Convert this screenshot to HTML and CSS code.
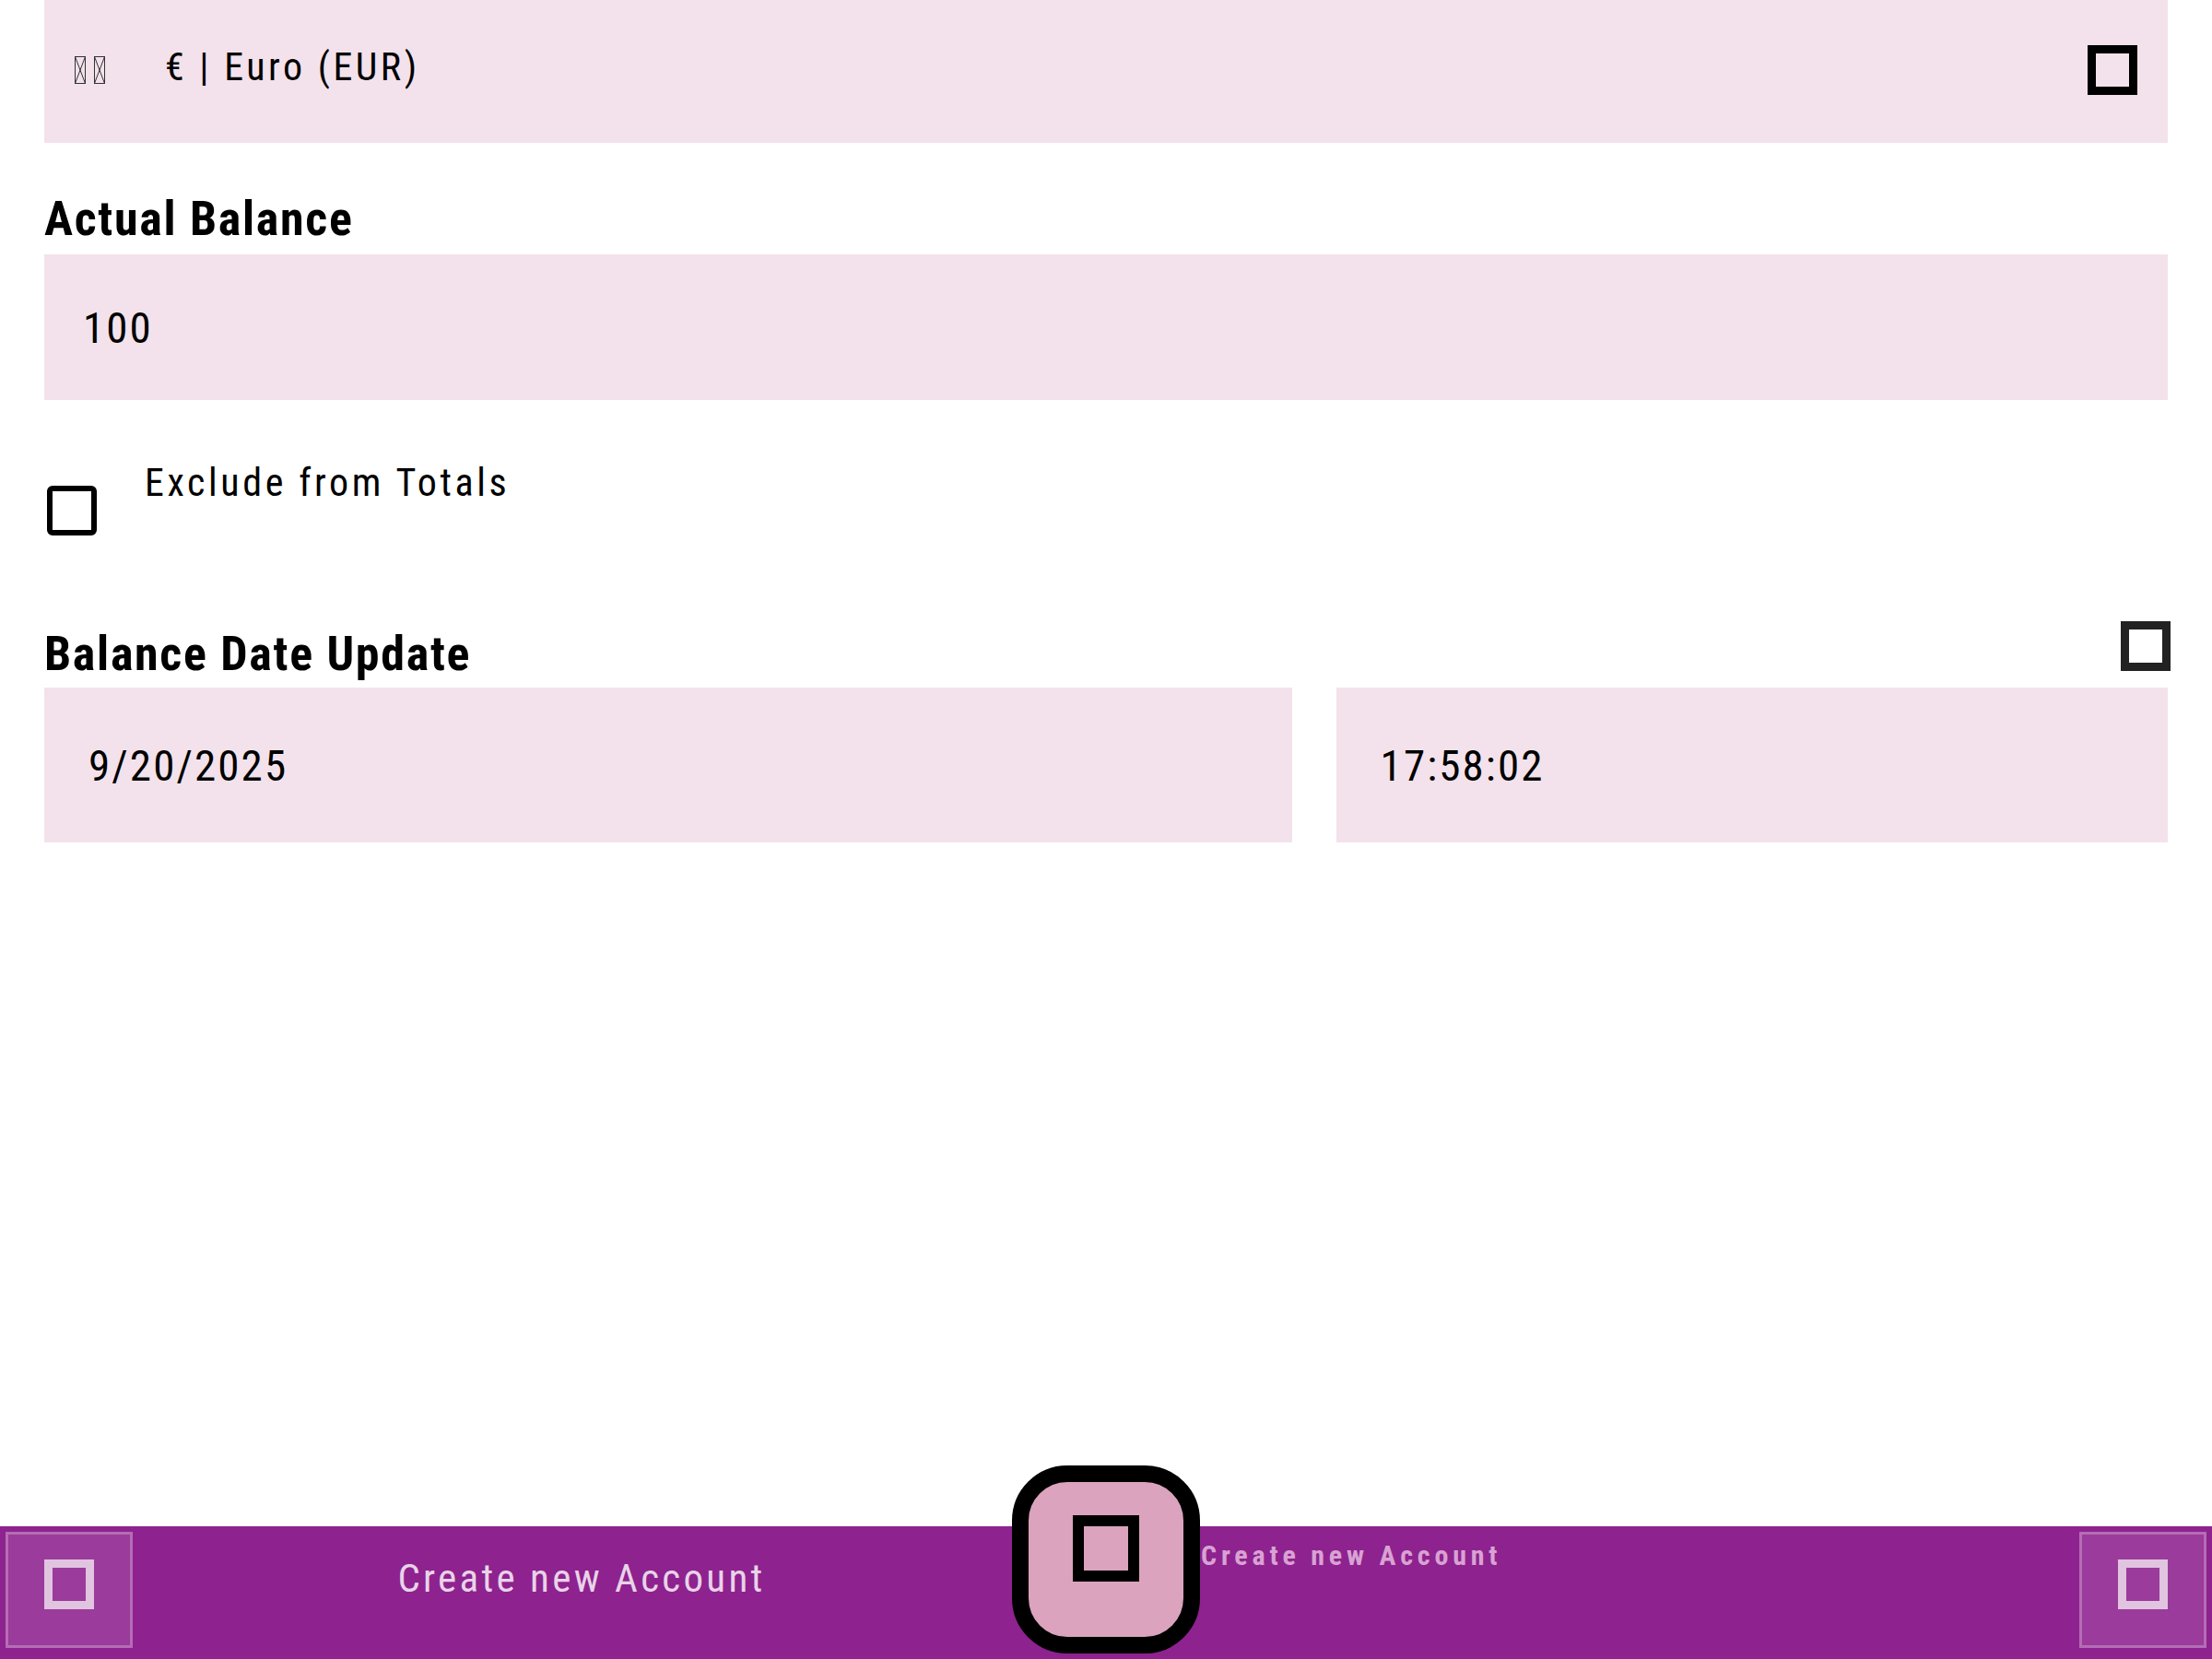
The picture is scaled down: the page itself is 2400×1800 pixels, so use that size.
FILE: index.html
```html
<!DOCTYPE html>
<html lang="en">
<head>
<meta charset="utf-8">
<title>Account</title>
<link rel="stylesheet" href="styles.css">
</head>
<body>
<div class="screen">
  <main class="form">
    <div class="field select-field">
      <span class="flag" aria-label="EU flag">
        <svg width="33" height="30" viewBox="0 0 33 30"><g fill="none" stroke="#333" stroke-width="1"><rect x="0.5" y="0.5" width="11" height="29"/><path d="M0.5 0.5 L11.5 29.5 M11.5 0.5 L0.5 29.5"/><rect x="21.5" y="0.5" width="11" height="29"/><path d="M21.5 0.5 L32.5 29.5 M32.5 0.5 L21.5 29.5"/></g></svg>
      </span>
      <span class="select-text">€ | Euro (EUR)</span>
      <span class="icon-box"></span>
    </div>
    <h2 class="label">Actual Balance</h2>
    <div class="field input-field"><span class="value">100</span></div>
    <div class="check-row">
      <span class="checkbox"></span>
      <span class="check-label">Exclude from Totals</span>
    </div>
    <div class="label-row">
      <h2 class="label">Balance Date Update</h2>
      <span class="icon-box dark"></span>
    </div>
    <div class="date-row">
      <div class="field date-field"><span class="value">9/20/2025</span></div>
      <div class="field time-field"><span class="value">17:58:02</span></div>
    </div>
  </main>
  <footer class="bottom-bar">
    <button class="bar-btn" type="button"><span class="icon-box light"></span></button>
    <div class="bar-label">Create new Account</div>
    <button class="fab" type="button"><span class="icon-box big"></span></button>
    <span class="fab-label">Create new Account</span>
    <button class="bar-btn end" type="button"><span class="icon-box light"></span></button>
  </footer>
</div>
</body>
</html>
```

FILE: styles.css
```css
* { box-sizing: border-box; }
html, body { margin: 0; padding: 0; background: #fff; }
body { font-family: Roboto, "Noto Sans", sans-serif; font-stretch: 75%; color: #000; }

.screen { width: 2400px; height: 1800px; display: flex; flex-direction: column; overflow: hidden; }
.form { flex: 1; padding: 0 48px; display: flex; flex-direction: column; }

.field { background: #f3e2eb; display: flex; align-items: center; }
.select-field { height: 155px; padding: 0 33px 4px 33px; }
.flag { display: flex; width: 98px; flex: none; }
.flag svg { display: block; }
.select-text { flex: 1; margin-bottom: 6px; font-size: 42px; line-height: 1; letter-spacing: 3.5px; }

.icon-box { display: block; width: 54px; height: 54px; border: 9px solid #000; flex: none; }
.icon-box.dark { border-color: #222; }
.icon-box.light { border-color: #e0c4e0; }
.icon-box.big { width: 72px; height: 72px; border-width: 12px; }

.label { margin: 57px 0 12px; font-size: 52px; line-height: 1; font-weight: 700; letter-spacing: 1.7px; }
.input-field { height: 158px; padding: 0 42px; }
.value { font-size: 47px; line-height: 1; letter-spacing: 2.1px; }

.check-row { display: flex; align-items: flex-start; margin-top: 69px; }
.checkbox { display: block; width: 54px; height: 54px; border: 6px solid #000; border-radius: 6px; margin: 24px 0 0 3px; flex: none; }
.check-label { margin-left: 52px; font-size: 42px; line-height: 1; letter-spacing: 3.6px; }

.label-row { display: flex; justify-content: space-between; align-items: flex-start; margin-top: 103px; }
.label-row .label { margin: 0 0 10px; }
.label-row .icon-box { margin: -10px -3px 0 0; }

.date-row { display: grid; grid-template-columns: 3fr 2fr; gap: 48px; }
.date-field, .time-field { height: 168px; padding: 0 48px; }

.bottom-bar { height: 144px; flex: none; background: #8e228e; display: flex; align-items: flex-start; padding: 6px 6px 0; }
.bar-btn { width: 138px; height: 126px; margin: 0; background: #9b3b9b; border: 3px solid #b56db5; padding: 27px 0 0; display: flex; justify-content: center; align-items: flex-start; flex: none; }
.bar-btn.end { margin-left: auto; }
.bar-label { width: 954px; flex: none; margin-top: 29px; padding-left: 20px; text-align: center; font-size: 43px; line-height: 1; color: #e8d3e8; letter-spacing: 3.3px; }
.fab { width: 204px; height: 204px; margin: -72px 0 0; flex: none; border: 18px solid #000; border-radius: 60px; background: #dba3bd; padding: 36px 0 0; display: flex; justify-content: center; align-items: flex-start; }
.fab-label { margin: 11px 0 0 1px; font-size: 30px; line-height: 1; font-weight: 700; color: #d8a2d3; letter-spacing: 4.8px; }
```
